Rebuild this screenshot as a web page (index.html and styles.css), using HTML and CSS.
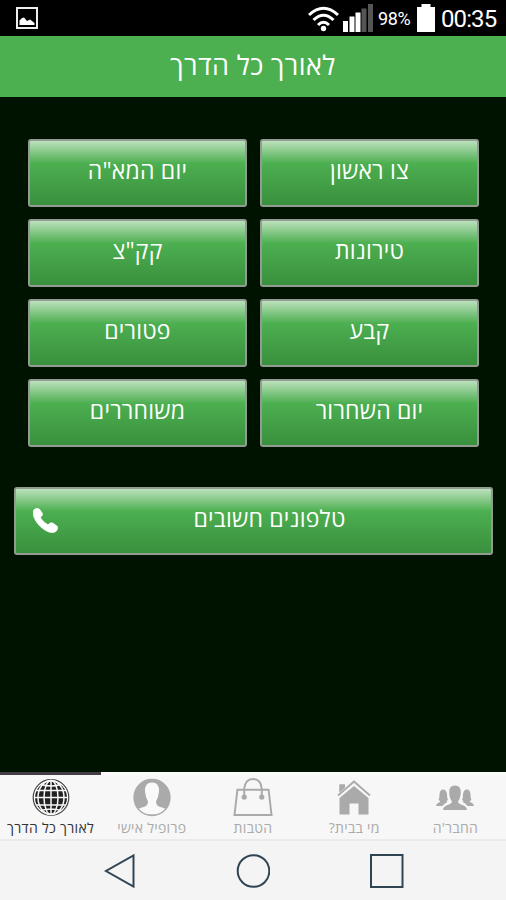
FILE: index.html
```html
<!DOCTYPE html>
<html lang="he" dir="rtl">
<head>
    <meta charset="UTF-8" />
    <title>לאורך כל הדרך</title>
    <link rel="stylesheet" href="styles.css">
</head>
<body>

<div class="status-bar">
    <svg class="picture-icon" width="22" height="22" viewBox="0 0 22 22">
        <rect x="1" y="1" width="20" height="20" fill="none" stroke="#eee" stroke-width="2"/>
        <path d="M3.500 18V13.500L6 11L8 10.500L11 14L14 12.500L18.500 16V18Z" fill="#fff"/>
    </svg>
    <svg class="wifi" width="31" height="26" viewBox="0 0 31 26">
        <g fill="none" stroke="#fff" stroke-width="3">
            <path d="M1 9Q15.500 -4.500 30 9"/>
            <path d="M5.500 14Q15.500 4.500 25.500 14"/>
            <path d="M10 19Q15.500 13.500 21 19"/>
        </g>
        <circle cx="15.500" cy="22.500" r="2.700" fill="#fff"/>
    </svg>
    <svg class="signal" width="30" height="28" viewBox="0 0 30 28">
        <path d="M0 17h5v11H0zM6.500 12.500h5V28h-5zM12.500 8.500h5V28h-5z" fill="#fff"/>
        <path d="M18.500 4.500h5V28h-5zM25 0h5v28h-5z" fill="#555"/>
    </svg>
    <span class="percent">98%</span>
    <svg class="battery" width="18" height="28" viewBox="0 0 18 28">
        <path d="M4.500 0h9v3H18v25H0V3h4.500z" fill="#fff"/>
    </svg>
    <span class="clock">00:35</span>
</div>

<div class="header">לאורך כל הדרך</div>

<div class="content">
    <div class="menu">
        <button class="btn">צו ראשון</button>
        <button class="btn">יום המא"ה</button>
        <button class="btn">טירונות</button>
        <button class="btn">קק"צ</button>
        <button class="btn">קבע</button>
        <button class="btn">פטורים</button>
        <button class="btn">יום השחרור</button>
        <button class="btn">משוחררים</button>
    </div>
    <button class="btn btn-wide">
        <span class="btn-label">טלפונים חשובים</span>
        <svg class="phone" width="25" height="25" viewBox="0 0 24 24">
            <path d="M1 1.500Q4-1 6.500 1.500L9 5Q10 7 7.500 8.500Q7 9 8 10.500Q10.500 14 14 15.800Q15 16 15.500 15.200Q17 13.500 19 14.500L23 17.300Q24.800 19 22.500 22Q19 25.500 12 21.500Q4 16.500 1 9Q-1 4 1 1.500Z" fill="#fff" stroke="#fff" stroke-width=".6"/>
        </svg>
    </button>
</div>

<div class="tabs">
    <div class="tab">
        <svg width="40" height="38" viewBox="0 0 40 38" fill="#aaa">
            <path d="M8 31.500Q8 27.500 14 26Q17 25 17 23Q14.800 20.500 14.300 15Q13.500 7 20 7T25.700 15Q25.200 20.500 23 23Q23 25 26 26Q32 27.500 32 31.500Z"/>
            <path d="M1 27.500Q1.500 24.500 5 23.500Q6 22.500 3.500 21.500Q4.500 20 4.500 16Q5 11 8 11Q11.500 11 12 16Q12 20 13 21.500Q10.500 22.500 12.500 23.500Q9 25 7.500 27.500ZM39 27.500Q38.500 24.500 35 23.500Q34 22.500 36.500 21.500Q35.500 20 35.500 16Q35 11 32 11Q28.500 11 28 16Q28 20 27 21.500Q29.500 22.500 27.500 23.500Q31 25 32.500 27.500Z"/>
        </svg>
        <span>החבר'ה</span>
    </div>
    <div class="tab">
        <svg width="40" height="38" viewBox="0 0 40 38">
            <path d="M5.500 16V6H11V11L5.500 16ZM5.500 19.500L20 7.500L34.500 19.500V36H24.500V25H15.500V36H5.500Z" fill="#aaa"/>
            <path d="M4 17.500L20 3L36 17.500" fill="none" stroke="#f7f7f7" stroke-width="4"/>
            <path d="M4 17L20 3L36 17" fill="none" stroke="#aaa" stroke-width="1.800"/>
            <path d="M5.500 13V6H11V9L5.500 14Z" fill="#aaa"/>
        </svg>
        <span>מי בבית?</span>
    </div>
    <div class="tab">
        <svg width="40" height="40" viewBox="0 0 40 40" fill="none" stroke="#aaa" stroke-width="2">
            <path d="M4 12H36L39 38H1Z"/>
            <path d="M11 19V11Q12 1 20 1T29 11V19"/>
            <circle cx="11" cy="19.500" r="1.700" fill="#aaa"/>
            <circle cx="29" cy="19.500" r="1.700" fill="#aaa"/>
        </svg>
        <span>הטבות</span>
    </div>
    <div class="tab">
        <svg width="38" height="38" viewBox="0 0 38 38">
            <circle cx="19" cy="19" r="18" fill="#aaa"/>
            <path d="M5 30.500Q8 29 12 28Q15 26.500 15 23Q12.500 19 12 13Q11.500 4 19 4T26 13Q25.500 19 23 23Q23 26.500 26 28Q30 29 33 30.500Q28 36 19 36T5 30.500Z" fill="#fafafa"/>
            <circle cx="19" cy="19" r="18" fill="none" stroke="#aaa" stroke-width="1.300"/>
        </svg>
        <span>פרופיל אישי</span>
    </div>
    <div class="tab active">
        <svg width="38" height="38" viewBox="0 0 38 38">
            <circle cx="19" cy="19" r="17.800" fill="#fff" stroke="#444" stroke-width="1.200"/>
            <circle cx="19" cy="19" r="16" fill="#222"/>
            <g fill="none" stroke="#f7f7f7" stroke-width="1.500">
                <path d="M19 2V36M2 19H36M4 12H34M4 26.500H34M9 6Q19 9 29 6M9 32Q19 29 29 32"/>
                <ellipse cx="19" cy="19" rx="7" ry="17"/>
                <ellipse cx="19" cy="19" rx="13" ry="17"/>
            </g>
        </svg>
        <span>לאורך כל הדרך</span>
    </div>
</div>

<div class="nav-bar">
    <svg width="34" height="36" viewBox="0 0 34 36"><rect x="1" y="2" width="31.500" height="32" /></svg>
    <svg width="34" height="36" viewBox="0 0 34 36"><circle cx="17.500" cy="18" r="15.800"/></svg>
    <svg width="34" height="36" viewBox="0 0 34 36"><path d="M31.500 2.500V33.500L4 18Z"/></svg>
</div>

</body>
</html>
```
FILE: styles.css
```css
* {
    box-sizing: border-box;
}

body {
    font-family: "Open Sans", "Noto Sans", sans-serif;
    margin: 0;
    height: 900px;
    display: flex;
    flex-direction: column;
    background-color: #001200;
    overflow: hidden;
}

.status-bar {
    direction: ltr;
    display: flex;
    align-items: center;
    height: 36px;
    padding: 0 9px 0 16px;
    background-color: #000;
    color: #fff;
    font-family: Roboto, sans-serif;
}

.picture-icon {
    margin-right: auto;
}

.wifi {
    margin: 2px 4px 0 0;
}

.signal {
    margin-right: 5px;
}

.percent {
    width: 39px;
    font-size: 18px;
    letter-spacing: -0.4px;
}

.battery {
    margin-right: 6px;
}

.clock {
    width: 56px;
    padding-top: 2px;
    font-size: 24px;
    letter-spacing: -0.9px;
    white-space: nowrap;
}

.header {
    height: 61px;
    line-height: 58px;
    background-color: #4caf50;
    color: #fff;
    font-size: 27px;
    letter-spacing: 0.4px;
    text-align: center;
}

.content {
    flex: 1;
    padding: 42px 13px 0 14px;
}

.menu {
    display: grid;
    grid-template-columns: 1fr 1fr;
    gap: 12px 13px;
    padding: 0 14px;
    margin-bottom: 40px;
}

.btn {
    height: 68px;
    padding: 0 0 7px;
    border: 2px solid #939c93;
    border-radius: 3px;
    background: linear-gradient(#c5e5c6, #4caf50 36%, #388e3c);
    background-origin: border-box;
    color: #fff;
    font-family: inherit;
    font-size: 23px;
    letter-spacing: 0.2px;
    text-align: center;
}

.btn-wide {
    display: flex;
    align-items: center;
    width: 100%;
    padding: 0 0 7px 17px;
}

.btn-label {
    flex: 1;
    margin-left: -26px;
    padding-left: 16px;
}

.phone {
    margin-top: 6px;
}

.tabs {
    display: flex;
    height: 69px;
    background-color: #f7f7f7;
    border-bottom: 2px solid #ebebeb;
}

.tab {
    flex: 1;
    display: flex;
    flex-direction: column;
    align-items: center;
    padding-top: 3px;
    border-top: 3px solid #fbfbfb;
    color: #aaa;
    font-size: 14px;
    letter-spacing: 0.3px;
    line-height: 18px;
    white-space: nowrap;
}

.tab svg {
    flex: none;
    height: 39px;
}

.tab span {
    margin-top: 2px;
}

.tab.active {
    border-top-color: #433c43;
    color: #333;
}

.nav-bar {
    display: flex;
    justify-content: center;
    gap: 100px;
    height: 59px;
    padding-top: 12px;
    background-color: #f4f4f4;
}

.nav-bar svg {
    fill: none;
    stroke: #2f4554;
    stroke-width: 2;
}
```
